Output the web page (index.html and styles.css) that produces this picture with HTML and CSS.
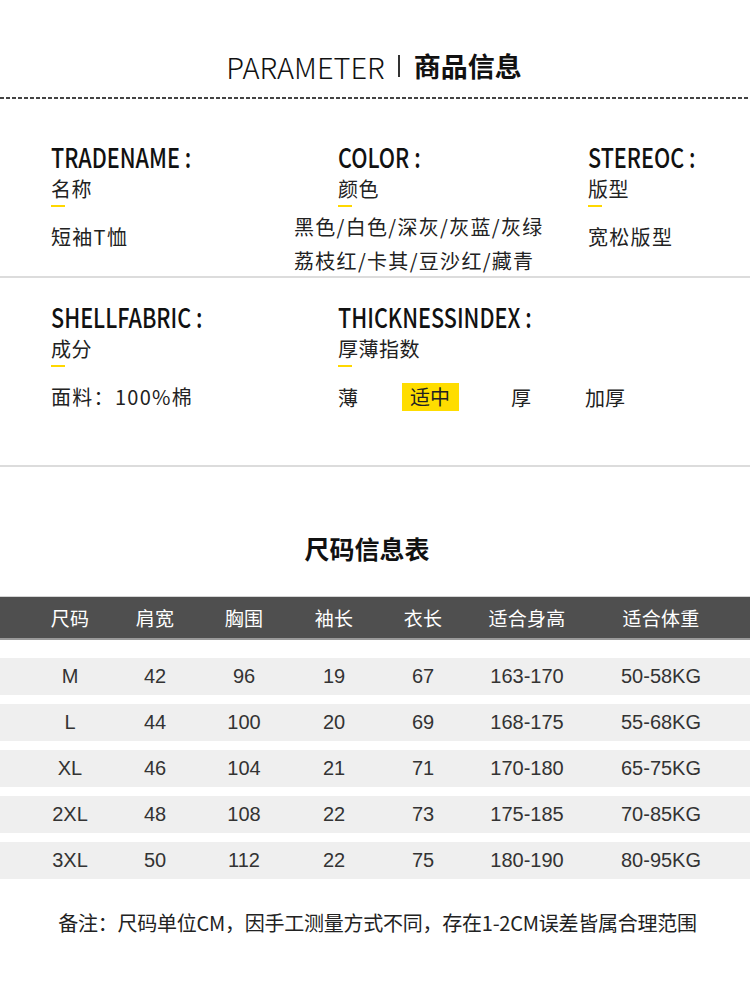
FILE: index.html
```html
<!DOCTYPE html>
<html lang="zh-CN">
<head>
<meta charset="utf-8">
<link rel="stylesheet" href="styles.css">
</head>
<body>
<div class="page">
  <header class="title">
    <span class="title-en">PARAMETER</span><span class="title-bar"></span><span class="title-cn">商品信息</span>
  </header>
  <div class="dash"></div>

  <section class="params params-1">
    <div class="param">
      <div class="label"><span class="label-text">TRADENAME :</span></div>
      <div class="cn">名称</div>
      <div class="mark"></div>
      <div class="value">短袖T恤</div>
    </div>
    <div class="param">
      <div class="label"><span class="label-text">COLOR :</span></div>
      <div class="cn">颜色</div>
      <div class="mark"></div>
      <div class="value value-colors">黑色/白色/深灰/灰蓝/灰绿<br>荔枝红/卡其/豆沙红/藏青</div>
    </div>
    <div class="param">
      <div class="label"><span class="label-text">STEREOC :</span></div>
      <div class="cn">版型</div>
      <div class="mark"></div>
      <div class="value">宽松版型</div>
    </div>
  </section>
  <div class="rule"></div>

  <section class="params params-2">
    <div class="param">
      <div class="label"><span class="label-text">SHELLFABRIC :</span></div>
      <div class="cn">成分</div>
      <div class="mark"></div>
      <div class="value">面料：100%棉</div>
    </div>
    <div class="param param-wide">
      <div class="label"><span class="label-text">THICKNESSINDEX :</span></div>
      <div class="cn">厚薄指数</div>
      <div class="mark"></div>
      <div class="thick">
        <span class="thick-item t1">薄</span>
        <span class="thick-item t2 active">适中</span>
        <span class="thick-item t3">厚</span>
        <span class="thick-item t4">加厚</span>
      </div>
    </div>
  </section>
  <div class="rule"></div>

  <h2 class="size-title">尺码信息表</h2>

  <div class="size-table">
    <div class="thead">
      <span>尺码</span><span>肩宽</span><span>胸围</span><span>袖长</span><span>衣长</span><span>适合身高</span><span>适合体重</span>
    </div>
    <div class="tbody">
      <div class="trow"><span>M</span><span>42</span><span>96</span><span>19</span><span>67</span><span>163-170</span><span>50-58KG</span></div>
      <div class="trow"><span>L</span><span>44</span><span>100</span><span>20</span><span>69</span><span>168-175</span><span>55-68KG</span></div>
      <div class="trow"><span>XL</span><span>46</span><span>104</span><span>21</span><span>71</span><span>170-180</span><span>65-75KG</span></div>
      <div class="trow"><span>2XL</span><span>48</span><span>108</span><span>22</span><span>73</span><span>175-185</span><span>70-85KG</span></div>
      <div class="trow"><span>3XL</span><span>50</span><span>112</span><span>22</span><span>75</span><span>180-190</span><span>80-95KG</span></div>
    </div>
  </div>

  <p class="note">备注：尺码单位CM，因手工测量方式不同，存在1-2CM误差皆属合理范围</p>
</div>
</body>
</html>
```

FILE: styles.css
```css
* { box-sizing: border-box; }
html, body { margin: 0; padding: 0; background: #fff; }
body {
  font-family: "Noto Sans CJK SC", "Noto Sans", sans-serif;
  color: #111;
  width: 750px;
}
.page { width: 750px; }

.title {
  display: flex;
  justify-content: center;
  align-items: center;
  height: 40px;
  margin-top: 46px;
  padding-right: 2px;
}
.title-en {
  font-size: 29px;
  font-weight: 300;
  line-height: 40px;
  color: #111;
}
.title-bar {
  width: 2px;
  height: 22px;
  background: #333;
  margin: 0 14px 0 13px;
}
.title-cn {
  font-size: 27px;
  font-weight: 700;
  line-height: 40px;
  color: #111;
}
.dash {
  margin-top: 11px;
  height: 2px;
  background: repeating-linear-gradient(to right, #444 0 4px, transparent 4px 6px);
}

.params {
  display: grid;
  grid-template-columns: 287px 250px 1fr;
  padding-left: 51px;
}
.params-1 { height: 177px; padding-top: 43px; }
.params-2 { height: 187px; padding-top: 24px; }
.param-wide { grid-column: span 2; }

.label {
  height: 30px;
  line-height: 30px;
  font-size: 27px;
  font-weight: 500;
  white-space: nowrap;
}
.label-text {
  display: inline-block;
  transform: scaleX(0.8);
  transform-origin: left center;
  color: #111;
}
.cn {
  margin-top: 5px;
  font-size: 20px;
  line-height: 24px;
  letter-spacing: 0.5px;
  color: #222;
}
.mark {
  margin-top: 4px;
  width: 14px;
  height: 2px;
  background: #ffd800;
}
.value {
  margin-top: 18px;
  font-size: 20px;
  line-height: 24px;
  letter-spacing: 1.3px;
  color: #222;
}
.value-colors {
  margin-top: 3px;
  margin-left: -44px;
  line-height: 34px;
}

.rule {
  height: 2px;
  background: #dcdcdc;
}

.thick {
  margin-top: 16px;
  display: flex;
  align-items: center;
  font-size: 20px;
  line-height: 27px;
  color: #222;
}
.thick-item { display: block; }
.t1 { width: 64px; }
.t2 { padding: 0 9px 0 8px; line-height: 28px; }
.t2.active { background: #ffdd00; }
.t3 { margin-left: 52px; width: 74px; }

.size-title {
  margin: 66px 0 0;
  padding-right: 16px;
  text-align: center;
  font-size: 25px;
  font-weight: 700;
  line-height: 30px;
  color: #111;
}

.size-table { margin-top: 33px; }
.thead, .trow {
  display: grid;
  grid-template-columns: 90px 80px 98px 82px 96px 112px 156px;
  padding-left: 25px;
  align-items: center;
  text-align: center;
}
.thead {
  height: 44px;
  background: #4f4f4f;
  border-top: 1px solid #d4d4d4;
  border-bottom: 2px solid #9a9a9a;
  color: #fff;
  font-size: 19px;
  letter-spacing: 0.3px;
}
.tbody {
  margin-top: 18px;
  display: flex;
  flex-direction: column;
  gap: 9px;
}
.trow {
  height: 37px;
  background: #efefef;
  font-family: "Liberation Sans", Arial, sans-serif;
  font-size: 20px;
  color: #333;
}

.note {
  margin: 29px 0 0;
  padding-left: 5px;
  text-align: center;
  font-size: 20px;
  line-height: 30px;
  letter-spacing: -0.25px;
  color: #222;
}
```
